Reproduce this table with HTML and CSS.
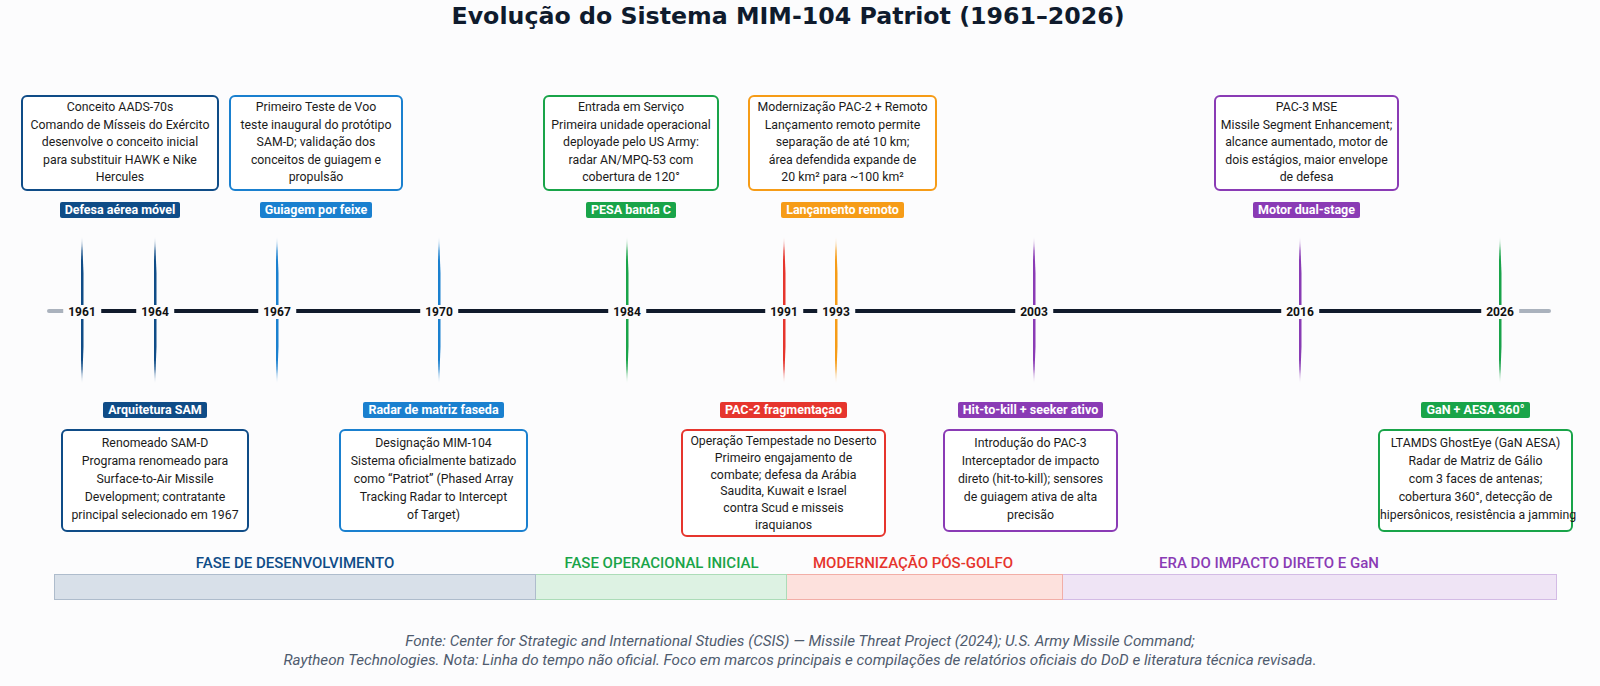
FILE: index.html
```html
<!DOCTYPE html>
<html lang="pt">
<head>
<meta charset="utf-8">
<title>Evolução do Sistema MIM-104 Patriot</title>
<link rel="stylesheet" href="styles.css">
</head>
<body>
<div class="page">
  <h1 class="title">Evolução do Sistema MIM-104 Patriot (1961–2026)</h1>

  <div class="timeline">
    <div class="axis"></div>

    <div class="spike navy" style="left:82px"></div>
    <div class="spike navy" style="left:155px"></div>
    <div class="spike blue" style="left:277px"></div>
    <div class="spike blue" style="left:439px"></div>
    <div class="spike green" style="left:627px"></div>
    <div class="spike red" style="left:784px"></div>
    <div class="spike orange" style="left:836px"></div>
    <div class="spike purple" style="left:1034px"></div>
    <div class="spike purple" style="left:1300px"></div>
    <div class="spike green" style="left:1500px"></div>

    <span class="year" style="left:82px">1961</span>
    <span class="year" style="left:155px">1964</span>
    <span class="year" style="left:277px">1967</span>
    <span class="year" style="left:439px">1970</span>
    <span class="year" style="left:627px">1984</span>
    <span class="year" style="left:784px">1991</span>
    <span class="year" style="left:836px">1993</span>
    <span class="year" style="left:1034px">2003</span>
    <span class="year" style="left:1300px">2016</span>
    <span class="year" style="left:1500px">2026</span>

    <div class="event top navy" style="left:21px;width:198px">
      <div class="box">Conceito AADS-70s<br>Comando de Mísseis do Exército<br>desenvolve o conceito inicial<br>para substituir HAWK e Nike<br>Hercules</div>
      <span class="tag">Defesa aérea móvel</span>
    </div>
    <div class="event top blue" style="left:229px;width:174px">
      <div class="box">Primeiro Teste de Voo<br>teste inaugural do protótipo<br>SAM-D; validação dos<br>conceitos de guiagem e<br>propulsão</div>
      <span class="tag">Guiagem por feixe</span>
    </div>
    <div class="event top green" style="left:543px;width:176px">
      <div class="box">Entrada em Serviço<br>Primeira unidade operacional<br>deployade pelo US Army:<br>radar AN/MPQ-53 com<br>cobertura de 120°</div>
      <span class="tag">PESA banda C</span>
    </div>
    <div class="event top orange" style="left:748px;width:189px">
      <div class="box">Modernização PAC-2 + Remoto<br>Lançamento remoto permite<br>separação de até 10 km;<br>área defendida expande de<br>20 km² para ~100 km²</div>
      <span class="tag">Lançamento remoto</span>
    </div>
    <div class="event top purple" style="left:1214px;width:185px">
      <div class="box">PAC-3 MSE<br>Missile Segment Enhancement;<br>alcance aumentado, motor de<br>dois estágios, maior envelope<br>de defesa</div>
      <span class="tag">Motor dual-stage</span>
    </div>

    <div class="event bottom navy" style="left:61px;width:188px">
      <span class="tag">Arquitetura SAM</span>
      <div class="box">Renomeado SAM-D<br>Programa renomeado para<br>Surface-to-Air Missile<br>Development; contratante<br>principal selecionado em 1967</div>
    </div>
    <div class="event bottom blue" style="left:339px;width:189px">
      <span class="tag">Radar de matriz faseda</span>
      <div class="box">Designação MIM-104<br>Sistema oficialmente batizado<br>como “Patriot” (Phased Array<br>Tracking Radar to Intercept<br>of Target)</div>
    </div>
    <div class="event bottom tight red" style="left:681px;width:205px">
      <span class="tag">PAC-2 fragmentaçao</span>
      <div class="box">Operação Tempestade no Deserto<br>Primeiro engajamento de<br>combate; defesa da Arábia<br>Saudita, Kuwait e Israel<br>contra Scud e misseis<br>iraquianos</div>
    </div>
    <div class="event bottom purple" style="left:943px;width:175px">
      <span class="tag">Hit-to-kill + seeker ativo</span>
      <div class="box">Introdução do PAC-3<br>Interceptador de impacto<br>direto (hit-to-kill); sensores<br>de guiagem ativa de alta<br>precisão</div>
    </div>
    <div class="event bottom green" style="left:1378px;width:195px">
      <span class="tag">GaN + AESA 360°</span>
      <div class="box">LTAMDS GhostEye (GaN AESA)<br>Radar de Matriz de Gálio<br>com 3 faces de antenas;<br>cobertura 360°, detecção de<br>hipersônicos, resistência a jamming</div>
    </div>
  </div>

  <div class="phases">
    <div class="phase-label dev">FASE DE DESENVOLVIMENTO</div>
    <div class="phase-label op">FASE OPERACIONAL INICIAL</div>
    <div class="phase-label mod" style="padding-right:24px">MODERNIZAÇÃO PÓS-GOLFO</div>
    <div class="phase-label era" style="padding-right:82px">ERA DO IMPACTO DIRETO E GaN</div>
    <div class="phase-bar dev"></div>
    <div class="phase-bar op"></div>
    <div class="phase-bar mod"></div>
    <div class="phase-bar era"></div>
  </div>

  <p class="footer">Fonte: Center for Strategic and International Studies (CSIS) — Missile Threat Project (2024); U.S. Army Missile Command;<br>Raytheon Technologies. Nota: Linha do tempo não oficial. Foco em marcos principais e compilações de relatórios oficiais do DoD e literatura técnica revisada.</p>
</div>
</body>
</html>
```

FILE: styles.css
```css
html, body {
  margin: 0;
  padding: 0;
  background: #fcfcfd;
}

.page {
  width: 1600px;
  height: 686px;
  overflow: hidden;
  font-family: Roboto, "Noto Sans", sans-serif;
  color: #1b1b1b;
}

.title {
  margin: 0;
  height: 40px;
  line-height: 32px;
  padding-right: 24px;
  text-align: center;
  font-family: "DejaVu Sans", sans-serif;
  font-weight: 700;
  font-size: 23.7px;
  color: #0f1b2d;
}

/* colour themes */
.navy   { --c: #0f4c87; }
.blue   { --c: #1a80cf; }
.green  { --c: #19a449; }
.red    { --c: #e6352d; }
.orange { --c: #f69c17; }
.purple { --c: #8a3bb5; }

.timeline {
  position: relative;
  height: 505px;
}

.axis {
  position: absolute;
  left: 47px;
  top: 269px;
  width: 1504px;
  height: 4px;
  border-radius: 2px;
  background: linear-gradient(to right, #aab2bd 0 35px, #101a2b 35px 1453px, #aab2bd 1453px);
}

.spike {
  position: absolute;
  top: 196px;
  width: 3px;
  height: 148px;
  margin-left: -1.5px;
  clip-path: polygon(50% 0, 100% 25%, 100% 75%, 50% 100%, 0 75%, 0 25%);
  background: linear-gradient(to bottom, rgba(255,255,255,0), var(--c) 10%, var(--c) 90%, rgba(255,255,255,0));
}

.year {
  position: absolute;
  top: 272px;
  transform: translate(-50%, -50%);
  padding: 0 5px;
  background: #fcfcfd;
  font-weight: 700;
  font-size: 12px;
  line-height: 14px;
  color: #111;
}

.event {
  position: absolute;
  display: flex;
  flex-direction: column;
  align-items: center;
  gap: 11px;
}

.event.top { top: 55px; }
.event.bottom { top: 362px; }

.box {
  box-sizing: border-box;
  width: 100%;
  border: 2px solid var(--c);
  border-radius: 6px;
  background: #fff;
  text-align: center;
  white-space: nowrap;
  font-size: 12.3px;
  color: #1b1b1b;
}

.top .box {
  line-height: 17.5px;
  padding: 2px 0;
}

.bottom .box {
  line-height: 18px;
  padding: 3px 0 6px;
}

.bottom.tight .box {
  line-height: 16.8px;
  padding: 2px 0 1px;
}

.tag {
  background: var(--c);
  color: #fff;
  font-weight: 700;
  font-size: 12.5px;
  line-height: 16px;
  padding: 0 5px;
  border-radius: 2px;
  white-space: nowrap;
}

.phases {
  display: grid;
  grid-template-columns: 482px 251px 276px 494px;
  row-gap: 1px;
  margin: 8px 0 0 54px;
}

.phase-label {
  height: 20px;
  line-height: 20px;
  text-align: center;
  font-size: 15px;
  font-weight: 500;
  white-space: nowrap;
}

.phase-bar {
  box-sizing: border-box;
  height: 26px;
  border: 1px solid;
}

.phase-label.dev { color: #0f4c87; }
.phase-label.op  { color: #19a449; }
.phase-label.mod { color: #e6352d; }
.phase-label.era { color: #8a3bb5; }

.phase-bar.dev { background: #d8e0e9; border-color: #aebccc; }
.phase-bar.op  { background: #ddf2e3; border-color: #acdcb8; border-left: none; }
.phase-bar.mod { background: #fde1dd; border-color: #f2aea7; border-left: none; }
.phase-bar.era { background: #efe4f5; border-color: #d3bbe5; border-left: none; }

.footer {
  margin: 32px 0 0;
  text-align: center;
  font-style: italic;
  font-size: 15.2px;
  line-height: 19px;
  color: #4f5b6e;
}
```
